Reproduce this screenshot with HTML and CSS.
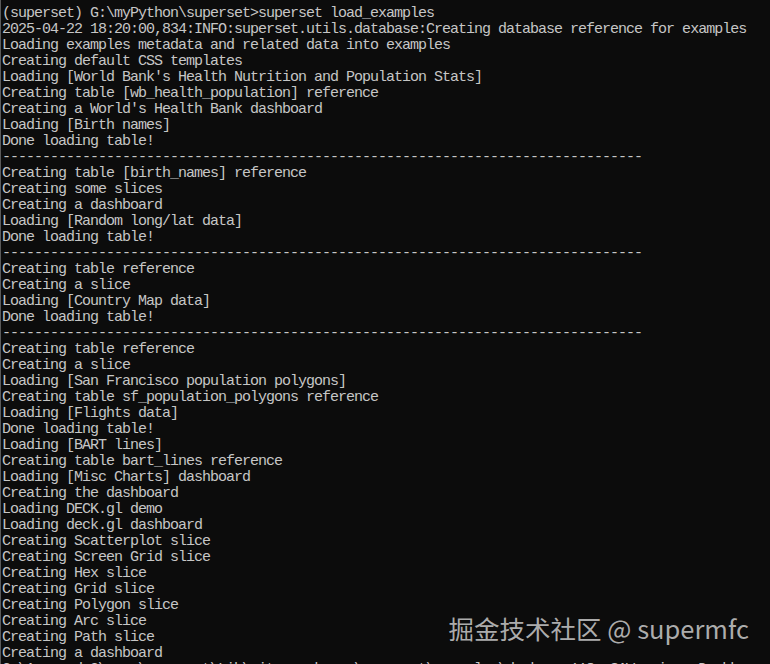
FILE: index.html
```html
<!DOCTYPE html>
<html lang="zh-CN">
<head>
<meta charset="utf-8">
<title>superset load_examples</title>
<link rel="stylesheet" href="styles.css">
</head>
<body>
<main class="console">
<pre class="output">(superset) G:\myPython\superset&gt;superset load_examples
2025-04-22 18:20:00,834:INFO:superset.utils.database:Creating database reference for examples
Loading examples metadata and related data into examples
Creating default CSS templates
Loading [World Bank's Health Nutrition and Population Stats]
Creating table [wb_health_population] reference
Creating a World's Health Bank dashboard
Loading [Birth names]
Done loading table!
--------------------------------------------------------------------------------
Creating table [birth_names] reference
Creating some slices
Creating a dashboard
Loading [Random long/lat data]
Done loading table!
--------------------------------------------------------------------------------
Creating table reference
Creating a slice
Loading [Country Map data]
Done loading table!
--------------------------------------------------------------------------------
Creating table reference
Creating a slice
Loading [San Francisco population polygons]
Creating table sf_population_polygons reference
Loading [Flights data]
Done loading table!
Loading [BART lines]
Creating table bart_lines reference
Loading [Misc Charts] dashboard
Creating the dashboard
Loading DECK.gl demo
Loading deck.gl dashboard
Creating Scatterplot slice
Creating Screen Grid slice
Creating Hex slice
Creating Grid slice
Creating Polygon slice
Creating Arc slice
Creating Path slice
Creating a dashboard
G:\Anaconda3\envs\superset\Lib\site-packages\superset\examples\deck.py:118: SAWarning: Dashbo</pre>
<div class="watermark">掘金技术社区 @ supermfc</div>
</main>
</body>
</html>
```
FILE: styles.css
```css
html, body {
  margin: 0;
  padding: 0;
  background: #0c0c0c;
  height: 100%;
  overflow: hidden;
}

.console {
  position: relative;
  height: 664px;
  border-left: 1px solid #5a5a5a;
  box-sizing: border-box;
  overflow: hidden;
}

.output {
  margin: 0;
  padding: 6px 0 0 1px;
  font-family: "Liberation Mono", "DejaVu Sans Mono", monospace;
  font-size: 15px;
  letter-spacing: -1px;
  line-height: 16px;
  color: #c6c6c6;
  white-space: pre;
}

.watermark {
  position: absolute;
  right: 21px;
  top: 611px;
  font-family: "Noto Sans CJK SC", "Noto Sans", sans-serif;
  font-size: 25.5px;
  line-height: 34px;
  color: rgba(210, 210, 210, 0.82);
  white-space: nowrap;
  background: #0c0c0c;
}
```
